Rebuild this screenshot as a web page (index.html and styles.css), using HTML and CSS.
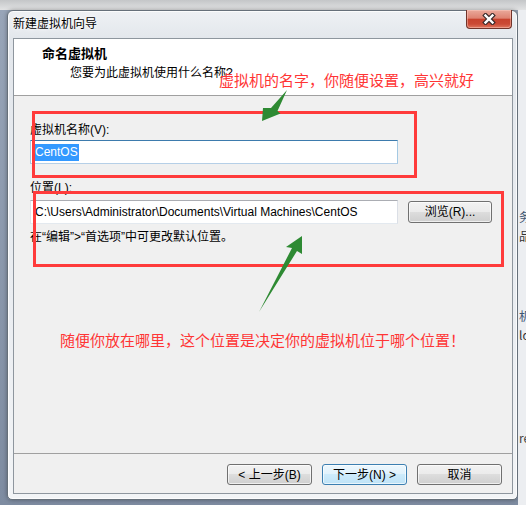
FILE: index.html
```html
<!doctype html>
<html>
<head>
<meta charset="utf-8">
<title>新建虚拟机向导</title>
<link rel="stylesheet" href="styles.css">
</head>

<body>
<div class="desk">
	<div class="side-left"></div>
	<div class="wizard">
		<div class="titlebar">
			<span class="caption">新建虚拟机向导</span>
			<a class="close" href="javascript:;">
				<svg width="14" height="12" viewBox="0 0 14 12">
					<path d="M3.5 2.5 L10.5 9.5 M10.5 2.5 L3.5 9.5" stroke="#3b2b2b" stroke-width="4.6" stroke-linecap="square"/>
					<path d="M3.5 2.5 L10.5 9.5 M10.5 2.5 L3.5 9.5" stroke="#fff" stroke-width="2.4" stroke-linecap="square"/>
				</svg>
			</a>
		</div>
		<div class="client">
			<div class="head">
				<h1>命名虚拟机</h1>
				<p>您要为此虚拟机使用什么名称?</p>
			</div>
			<div class="main">
				<div class="lbl">虚拟机名称(V):</div>
				<div class="textbox focus"><span class="sel">CentOS</span></div>
				<div class="lbl lbl-path">位置(L):</div>
				<div class="row">
					<div class="textbox">C:\Users\Administrator\Documents\Virtual Machines\CentOS</div>
					<a class="btn btn-browse" href="javascript:;">浏览(R)...</a>
				</div>
				<p class="hint">在“编辑”>“首选项”中可更改默认位置。</p>
			</div>
			<div class="foot">
				<a class="btn" href="javascript:;">&lt; 上一步(B)</a>
				<a class="btn btn-default" href="javascript:;">下一步(N) &gt;</a>
				<a class="btn" href="javascript:;">取消</a>
			</div>
		</div>
	</div>
	<div class="side-right">
		<div class="frag frag-1">务</div>
		<div class="frag frag-2">品</div>
		<div class="frag frag-3">机</div>
		<div class="frag frag-4">ld</div>
		<div class="frag frag-5">re</div>
	</div>
</div>

<!-- 标注 -->
<div class="marks">
	<div class="box box-name"></div>
	<div class="box box-path"></div>
	<div class="note note-name">虚拟机的名字，你随便设置，高兴就好</div>
	<div class="note note-path">随便你放在哪里，这个位置是决定你的虚拟机位于哪个位置！</div>
	<svg class="arrows" width="526" height="505" viewBox="0 0 526 505">
		<polygon points="287,90 277.5,111 280.5,113.5 262,121 263,108 271,108" fill="#2e8a33"/>
		<polygon points="302,236 286,247 292,248 259,312 297,251 302,254" fill="#2e8a33"/>
	</svg>
</div>
</body>
</html>
```

FILE: styles.css
```css
*{box-sizing:border-box;}
body{margin:0; font-family:"Liberation Sans","Noto Sans CJK SC",sans-serif; font-size:12px; color:#000;}
a{color:#000; text-decoration:none;}
h1,p{margin:0;}

.desk{display:flex; width:526px; height:505px; overflow:hidden; background:linear-gradient(to bottom,#c4c6c8 0,#e2e3e4 10px,#98a5b8 10px,#7e8ca1 100%);}
.side-left{width:7px; flex:none;}
.side-right{flex:1; margin-top:10px; background:#eceef1; overflow:hidden; font-family:"Noto Sans CJK SC",sans-serif; font-size:12px; line-height:14px;}
.frag{padding-left:1px; color:#3e5673; white-space:nowrap;}
.frag-1{margin-top:200px;}
.frag-2{margin-top:5px; color:#333;}
.frag-3{margin-top:66px;}
.frag-4{margin-top:5px; color:#333;}
.frag-5{margin-top:89px; color:#444;}

.wizard{width:511px; height:490px; margin-top:10px; flex:none; display:flex; flex-direction:column; border:1px solid #66707a; border-radius:6px 6px 5px 5px; background:linear-gradient(to bottom,#eef1f4 0,#e3e7ec 27px,#eaedf1 60%,#f2f4f6 100%); box-shadow:inset 0 0 0 1px rgba(255,255,255,.75), 0 0 4px rgba(0,0,0,.35);}
.titlebar{height:27px; flex:none; display:flex; align-items:flex-start; padding:0 5px 0 5px;}
.caption{margin-top:5px; line-height:16px; font-size:12px; text-shadow:0 0 6px #fff,0 0 3px #fff;}
.close{margin-left:auto; margin-top:-1px; width:46px; height:19px; display:flex; align-items:center; justify-content:center; border:1px solid #71342a; border-top:none; border-radius:0 0 4px 4px; background:linear-gradient(to bottom,#eaa99b 0,#de8372 45%,#c8432e 52%,#cb4a35 78%,#e0775f 100%); box-shadow:inset 0 0 0 1px rgba(255,210,200,.45);}

.client{flex:1; margin:0 4px 5px 5px; display:flex; flex-direction:column; border:1px solid #8e969e; background:#f0f0f0;}
.head{height:57px; flex:none; padding:7px 0 0 28px; background:#fff; border-bottom:1px solid #a0a0a0;}
.head h1{font-size:13px; line-height:16px; font-weight:bold;}
.head p{margin:3px 0 0 28px; line-height:16px;}

.main{flex:1; padding:26px 0 0 16px;}
.lbl{line-height:16px;}
.lbl-path{margin-top:16px;}
.textbox{width:368px; height:24px; padding:0 4px; line-height:22px; background:#fff; border:1px solid; border-color:#abadb3 #dbdfe6 #e3e9ef #e2e3ea; white-space:nowrap; overflow:hidden;}
.focus{margin-top:2px; border-color:#3d7bad #a4c9e3 #b5cfe7 #a4c9e3;}
.sel{display:inline-block; line-height:17px; padding:0 1px 0 0; background:#3399ff; color:#fff; vertical-align:middle;}
.row{display:flex; align-items:center; margin-top:4px;}
.hint{margin-top:5px; line-height:16px;}

.btn{display:flex; align-items:center; justify-content:center; width:85px; height:21px; border:1px solid #707070; border-radius:3px; background:linear-gradient(to bottom,#f2f2f2 0,#ebebeb 49%,#dddddd 50%,#cfcfcf 100%); box-shadow:inset 0 0 0 1px rgba(255,255,255,.65); font-size:12px; line-height:16px;}
.btn-browse{width:84px; height:22px; margin-left:10px;}
.btn-default{border-color:#3c7fb1; background:linear-gradient(to bottom,#edf7fd 0,#e0f2fc 49%,#cdebfb 50%,#bfe3f7 100%);}
.foot{height:40px; flex:none; display:flex; justify-content:flex-end; gap:10px; padding:10px 10px 0 0; border-top:1px solid #a0a0a0;}

.marks{position:absolute; left:0; top:0; width:526px; height:505px; pointer-events:none;}
.box{position:absolute; border:3px solid #ff3b3b;}
.box-name{left:32px; top:111px; width:385px; height:67px;}
.box-path{left:33px; top:191px; width:471px; height:76px;}
.note{position:absolute; font-family:"Noto Sans CJK SC",sans-serif; font-size:15px; line-height:19px; color:#ff3535; white-space:nowrap;}
.note-name{left:219px; top:70px;}
.note-path{left:60px; top:330px;}
.arrows{position:absolute; left:0; top:0;}
```
